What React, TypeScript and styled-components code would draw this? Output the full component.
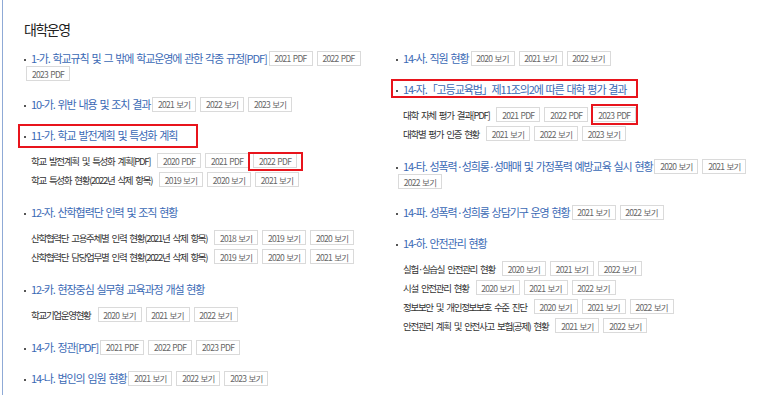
import React from 'react';
import styled, { createGlobalStyle, css } from 'styled-components';

const GlobalStyle = createGlobalStyle`
  html, body { margin: 0; padding: 0; background: #fff; }
  body { font-family: "Noto Sans CJK KR", "Noto Sans", sans-serif; }
  * { box-sizing: border-box; }
`;

type Box = [number, number, number, number];

type BoxProps = { $box?: Box };

const highlight = css<BoxProps>`
  position: relative;
  ${(p) =>
    p.$box &&
    css`
      &::after {
        content: '';
        position: absolute;
        top: ${-p.$box[0]}px;
        right: ${-p.$box[1]}px;
        bottom: ${-p.$box[2]}px;
        left: ${-p.$box[3]}px;
        border: 2px solid #e8141c;
        pointer-events: none;
      }
    `}
`;

const Page = styled.div`
  margin-left: 2px;
  border-left: 1px solid #8faad6;
  min-height: 100vh;
  padding: 19px 8px 0 21px;
`;

const PageTitle = styled.h2`
  margin: 0;
  font-size: 14px;
  line-height: 20px;
  font-weight: 400;
  color: #222;
  letter-spacing: -1.5px;
`;

const Columns = styled.div`
  display: grid;
  grid-template-columns: 356px 1fr;
  column-gap: 16px;
  margin-top: 11px;
`;

const List = styled.ul`
  list-style: none;
  margin: 0;
  padding: 0;
  display: flex;
  flex-direction: column;
  gap: 15px;
`;

const Section = styled.li``;

const HeadRow = styled.div`
  display: flex;
  flex-wrap: wrap;
  align-items: center;
`;

const Title = styled.a<BoxProps>`
  ${highlight}
  font-size: 11px;
  line-height: 16px;
  letter-spacing: -1.1px;
  word-spacing: 1.5px;
  color: #3a69b5;
  white-space: nowrap;
  text-decoration: none;
  &::before {
    content: '';
    display: inline-block;
    width: 2px;
    height: 2px;
    background: #555;
    margin-right: 5px;
    vertical-align: middle;
  }
`;

const Btn = styled.span<BoxProps>`
  ${highlight}
  display: inline-flex;
  align-items: center;
  justify-content: center;
  width: 44px;
  height: 15px;
  margin: 0 2px;
  border: 1px solid #dadada;
  background: #fff;
  color: #666;
  font-size: 8.5px;
  letter-spacing: -0.7px;
  word-spacing: 1px;
  white-space: nowrap;
`;

const SubList = styled.div`
  margin-top: 8px;
  padding-left: 7px;
`;

const SubRow = styled.div`
  display: flex;
  align-items: center;
  height: 19px;
`;

const SubLabel = styled.span`
  font-size: 9.5px;
  letter-spacing: -1.3px;
  word-spacing: 2.2px;
  color: #333;
  margin-right: 5px;
  white-space: nowrap;
`;

type BtnData = string | { t: string; box: Box };
type Sub = { label: string; btns: BtnData[] };
type Item = { title: string; box?: Box; btns?: BtnData[]; subs?: Sub[] };

const v = (ys: number[]) => ys.map((y) => `${y} 보기`);
const pdf = (ys: number[]) => ys.map((y) => `${y} PDF`);

const leftItems: Item[] = [
  { title: '1-가. 학교규칙 및 그 밖에 학교운영에 관한 각종 규정[PDF]', btns: pdf([2021, 2022, 2023]) },
  { title: '10-가. 위반 내용 및 조치 결과', btns: v([2021, 2022, 2023]) },
  {
    title: '11-가. 학교 발전계획 및 특성화 계획',
    box: [3, 21, 5, 6],
    subs: [
      { label: '학교 발전계획 및 특성화 계획[PDF]', btns: ['2020 PDF', '2021 PDF', { t: '2022 PDF', box: [2, 7, 4, 6] }] },
      { label: '학교 특성화 현황(2022년 삭제 항목)', btns: v([2019, 2020, 2021]) },
    ],
  },
  {
    title: '12-자. 산학협력단 인력 및 조직 현황',
    subs: [
      { label: '산학협력단 고용주체별 인력 현황(2021년 삭제 항목)', btns: v([2018, 2019, 2020]) },
      { label: '산학협력단 담당업무별 인력 현황(2022년 삭제 항목)', btns: v([2019, 2020, 2021]) },
    ],
  },
  {
    title: '12-카. 현장중심 실무형 교육과정 개설 현황',
    subs: [{ label: '학교기업운영현황', btns: v([2020, 2021, 2022]) }],
  },
  { title: '14-가. 정관[PDF]', btns: pdf([2021, 2022, 2023]) },
  { title: '14-나. 법인의 임원 현황', btns: v([2021, 2022, 2023]) },
];

const rightItems: Item[] = [
  { title: '14-사. 직원 현황', btns: v([2020, 2021, 2022]) },
  {
    title: '14-자.「고등교육법」제11조의2에 따른 대학 평가 결과',
    box: [2, 12, 1, 5],
    subs: [
      { label: '대학 자체 평가 결과[PDF]', btns: ['2021 PDF', '2022 PDF', { t: '2023 PDF', box: [4, 3, 4, 2] }] },
      { label: '대학별 평가 인증 현황', btns: v([2021, 2022, 2023]) },
    ],
  },
  { title: '14-타. 성폭력·성희롱·성매매 및 가정폭력 예방교육 실시 현황', btns: v([2020, 2021, 2022]) },
  { title: '14-파. 성폭력·성희롱 상담기구 운영 현황', btns: v([2021, 2022]) },
  {
    title: '14-하. 안전관리 현황',
    subs: [
      { label: '실험·실습실 안전관리 현황', btns: v([2020, 2021, 2022]) },
      { label: '시설 안전관리 현황', btns: v([2020, 2021, 2022]) },
      { label: '정보보안 및 개인정보보호 수준 진단', btns: v([2020, 2021, 2022]) },
      { label: '안전관리 계획 및 안전사고 보험(공제) 현황', btns: v([2021, 2022]) },
    ],
  },
];

const renderBtn = (b: BtnData, i: number) =>
  typeof b === 'string' ? (
    <Btn key={i}>{b}</Btn>
  ) : (
    <Btn key={i} $box={b.box}>
      {b.t}
    </Btn>
  );

const Column = ({ items }: { items: Item[] }) => (
  <List>
    {items.map((it, i) => (
      <Section key={i}>
        <HeadRow>
          <Title $box={it.box}>{it.title}</Title>
          {it.btns?.map(renderBtn)}
        </HeadRow>
        {it.subs && (
          <SubList>
            {it.subs.map((s, j) => (
              <SubRow key={j}>
                <SubLabel>{s.label}</SubLabel>
                {s.btns.map(renderBtn)}
              </SubRow>
            ))}
          </SubList>
        )}
      </Section>
    ))}
  </List>
);

export default function App() {
  return (
    <>
      <GlobalStyle />
      <Page>
        <PageTitle>대학운영</PageTitle>
        <Columns>
          <Column items={leftItems} />
          <Column items={rightItems} />
        </Columns>
      </Page>
    </>
  );
}
